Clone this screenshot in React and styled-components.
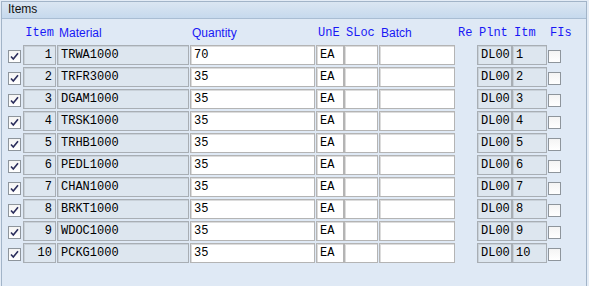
import React from "react";
import styled, { createGlobalStyle } from "styled-components";

const GlobalStyle = createGlobalStyle`
  html, body {
    margin: 0;
    padding: 0;
    background: #e4ecf6;
  }
`;

const Frame = styled.div`
  margin: 1px 0 0 1px;
  width: 586px;
  height: 290px;
  border: 1px solid #a2b4c8;
  border-bottom: none;
  background: #dfe9f5;
  box-sizing: border-box;
`;

const TitleBar = styled.div`
  height: 16px;
  border-bottom: 1px solid #a9bdd3;
  background: linear-gradient(#dbe6f2, #c6d9ed);
  font-family: "Liberation Sans", Arial, sans-serif;
  font-size: 12px;
  line-height: 15px;
  color: #111;
  padding-left: 6px;
`;

const Table = styled.div`
  padding: 7px 0 0 5px;
  display: flex;
  flex-direction: column;
  gap: 2px;
`;

const Row = styled.div`
  display: flex;
  align-items: center;
  height: 20px;
`;

const HeadRow = styled(Row)`
  height: 14px;
  align-items: flex-end;
  margin-bottom: 3px;
`;

const Head = styled.div`
  width: ${(p) => p.$w}px;
  margin-left: ${(p) => p.$ml}px;
  flex: none;
  font-family: ${(p) =>
    p.$mono ? '"Liberation Mono", "Courier New", monospace' : '"Liberation Sans", Arial, sans-serif'};
  font-size: 12px;
  line-height: 14px;
  color: #1818f5;
  white-space: nowrap;
  text-align: ${(p) => (p.$right ? "right" : "left")};
  padding: 0 2px;
  box-sizing: border-box;
  overflow: visible;
`;

const Cell = styled.div`
  width: ${(p) => p.$w}px;
  margin-left: ${(p) => p.$ml}px;
  flex: none;
  height: 20px;
  box-sizing: border-box;
  border: 1px solid ${(p) => (p.$ro ? "#a8aeb4" : "#b4b4b4")};
  box-shadow: inset 1px 1px 0 ${(p) => (p.$ro ? "#c9d1d9" : "#dcdcdc")};
  background: ${(p) => (p.$ro ? "#dde6ef" : "#ffffff")};
  font-family: "Liberation Mono", "Courier New", monospace;
  font-size: 12px;
  line-height: 18px;
  color: #000;
  padding: 0 ${(p) => (p.$right ? "3px" : "0")} 0 ${(p) => (p.$right ? "0" : "3px")};
  text-align: ${(p) => (p.$right ? "right" : "left")};
  white-space: nowrap;
  overflow: hidden;
`;

const Gap = styled.div`
  width: ${(p) => p.$w}px;
  margin-left: ${(p) => p.$ml}px;
  flex: none;
`;

const Box = styled.div`
  width: 13px;
  height: 13px;
  margin-left: ${(p) => p.$ml}px;
  margin-top: 3px;
  flex: none;
  box-sizing: border-box;
  border: 1px solid #8e959c;
  background: linear-gradient(#f4f4f4, #ffffff);
  display: flex;
  align-items: center;
  justify-content: center;
`;

const Check = ({ on, ml }) => (
  <Box $ml={ml}>
    {on && (
      <svg width="9" height="9" viewBox="0 0 9 9">
        <path d="M1 4.5 L3.3 7 L8 1.2" fill="none" stroke="#2b2d5c" strokeWidth="1.6" />
      </svg>
    )}
  </Box>
);

const cols = [
  { key: "sel", w: 13, ml: 1, label: "", type: "check" },
  { key: "item", w: 33, ml: 2, label: "Item", mono: true, right: true, ro: true },
  { key: "mat", w: 132, ml: 1, label: "Material", ro: true },
  { key: "qty", w: 125, ml: 1, label: "Quantity" },
  { key: "une", w: 28, ml: 1, label: "UnE", mono: true },
  { key: "sloc", w: 34, ml: 0, label: "SLoc", mono: true },
  { key: "batch", w: 76, ml: 1, label: "Batch" },
  { key: "re", w: 21, ml: 1, label: "Re", mono: true, type: "gap" },
  { key: "plnt", w: 35, ml: 0, label: "Plnt", mono: true, ro: true },
  { key: "itm", w: 35, ml: 0, label: "Itm", mono: true, ro: true },
  { key: "fis", w: 13, ml: 1, label: "FIs", mono: true, type: "checkOff" },
];

const materials = [
  "TRWA1000",
  "TRFR3000",
  "DGAM1000",
  "TRSK1000",
  "TRHB1000",
  "PEDL1000",
  "CHAN1000",
  "BRKT1000",
  "WDOC1000",
  "PCKG1000",
];

const rows = materials.map((m, i) => ({
  item: String(i + 1),
  mat: m,
  qty: i === 0 ? "70" : "35",
  une: "EA",
  sloc: "",
  batch: "",
  plnt: "DL00",
  itm: String(i + 1),
}));

const App = () => {
  return (
    <>
      <GlobalStyle />
      <Frame>
        <TitleBar>Items</TitleBar>
        <Table>
          <HeadRow>
            {cols.map((c) => (
              <Head key={c.key} $w={c.w} $ml={c.ml} $mono={c.mono} $right={c.right}>
                {c.label}
              </Head>
            ))}
          </HeadRow>
          {rows.map((r, i) => (
            <Row key={i}>
              {cols.map((c) => {
                if (c.type === "check") return <Check key={c.key} on ml={c.ml} />;
                if (c.type === "checkOff") return <Check key={c.key} ml={c.ml} />;
                if (c.type === "gap") return <Gap key={c.key} $w={c.w} $ml={c.ml} />;
                return (
                  <Cell key={c.key} $w={c.w} $ml={c.ml} $ro={c.ro} $right={c.right}>
                    {r[c.key]}
                  </Cell>
                );
              })}
            </Row>
          ))}
        </Table>
      </Frame>
    </>
  );
};

export default App;
